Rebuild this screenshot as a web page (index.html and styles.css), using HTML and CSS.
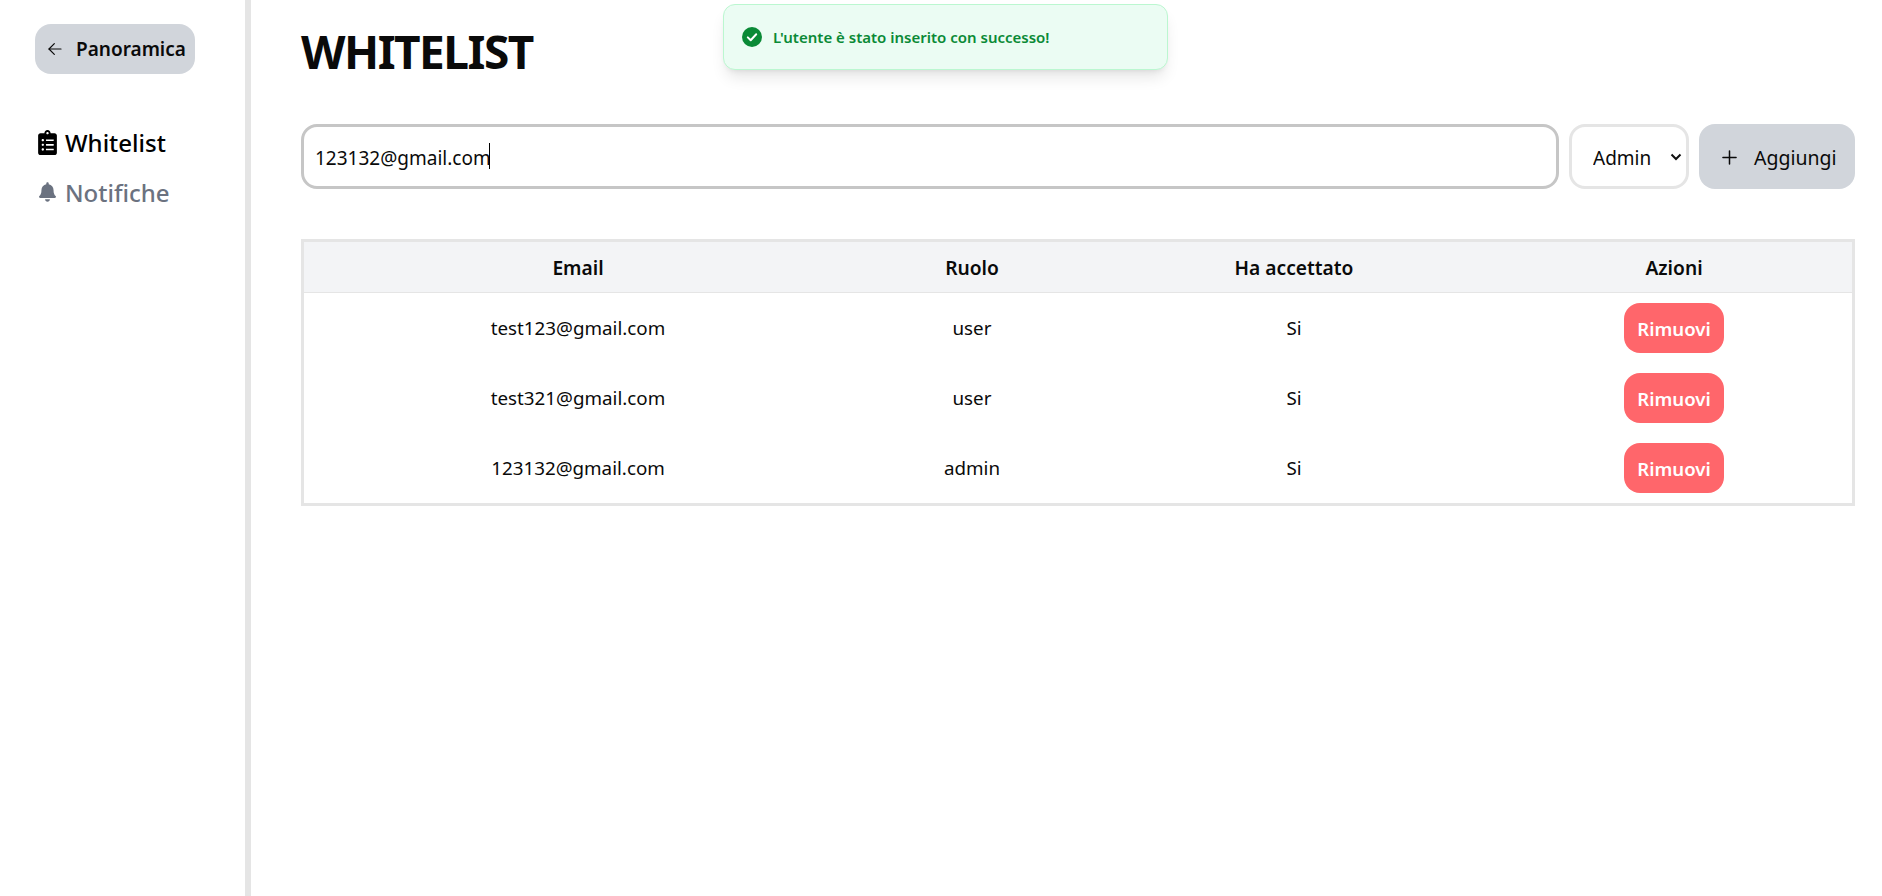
FILE: index.html
```html
<!DOCTYPE html>
<html lang="en">
<head>
  <meta charset="UTF-8">
  <meta name="viewport" content="width=device-width, initial-scale=1.0">
  <title>Whitelist</title>
  <link rel="stylesheet" href="styles.css">
</head>
<body>
  <aside class="sidebar">
    <button class="back-btn" type="button">
      <svg class="back-icon" viewBox="0 0 24 24" fill="none" stroke="currentColor" stroke-width="1.8" stroke-linecap="round" stroke-linejoin="round"><path d="M21 12H3"/><path d="M11 4l-8 8 8 8"/></svg>
      Panoramica
    </button>
    <nav class="side-nav">
      <a class="side-link active" href="#">
        <span class="side-icon">
          <svg class="icon-clip" viewBox="0 0 384 512" fill="currentColor"><path d="M336 64h-80c0-35.3-28.7-64-64-64s-64 28.7-64 64H48C21.5 64 0 85.5 0 112v352c0 26.5 21.5 48 48 48h288c26.5 0 48-21.5 48-48V112c0-26.5-21.5-48-48-48zM96 424c-13.3 0-24-10.7-24-24s10.7-24 24-24 24 10.7 24 24-10.7 24-24 24zm0-96c-13.3 0-24-10.7-24-24s10.7-24 24-24 24 10.7 24 24-10.7 24-24 24zm0-96c-13.3 0-24-10.7-24-24s10.7-24 24-24 24 10.7 24 24-10.7 24-24 24zm96-192c13.3 0 24 10.7 24 24s-10.7 24-24 24-24-10.7-24-24 10.7-24 24-24zm128 368c0 4.4-3.6 8-8 8H168c-4.4 0-8-3.6-8-8v-16c0-4.4 3.6-8 8-8h144c4.4 0 8 3.6 8 8v16zm0-96c0 4.4-3.6 8-8 8H168c-4.4 0-8-3.6-8-8v-16c0-4.4 3.6-8 8-8h144c4.4 0 8 3.6 8 8v16zm0-96c0 4.4-3.6 8-8 8H168c-4.4 0-8-3.6-8-8v-16c0-4.4 3.6-8 8-8h144c4.4 0 8 3.6 8 8v16z"/></svg>
        </span>
        Whitelist
      </a>
      <a class="side-link" href="#">
        <span class="side-icon">
          <svg class="icon-bell" viewBox="0 0 448 512" fill="currentColor"><path d="M224 512c35.32 0 63.97-28.65 63.97-64H160.03c0 35.35 28.65 64 63.97 64zm215.39-149.71c-19.32-20.76-55.47-51.99-55.47-154.29 0-77.7-54.48-139.9-127.94-155.16V32c0-17.67-14.32-32-31.98-32s-31.98 14.33-31.98 32v20.84C118.56 68.1 64.08 130.3 64.08 208c0 102.3-36.15 133.53-55.47 154.29-6 6.45-8.66 14.16-8.61 21.71.11 16.4 12.98 32 32.1 32h383.8c19.12 0 32-15.6 32.1-32 .05-7.55-2.61-15.27-8.61-21.71z"/></svg>
        </span>
        Notifiche
      </a>
    </nav>
  </aside>

  <main class="content">
    <h1 class="page-title">WHITELIST</h1>

    <form class="add-form">
      <div class="email-field">
        <input class="email-input" type="email" value="123132@gmail.com">
        <span class="caret"></span>
      </div>
      <select class="role-select">
        <option>Admin</option>
        <option>User</option>
      </select>
      <button class="add-btn" type="button">
        <svg class="plus-icon" viewBox="0 0 16 16" fill="none" stroke="currentColor" stroke-width="1.6" stroke-linecap="round"><path d="M8 1v14"/><path d="M1 8h14"/></svg>
        Aggiungi
      </button>
    </form>

    <div class="table-wrap">
      <table class="users">
        <colgroup>
          <col class="col-email">
          <col class="col-role">
          <col class="col-accepted">
          <col class="col-actions">
        </colgroup>
        <thead>
          <tr>
            <th>Email</th>
            <th>Ruolo</th>
            <th>Ha accettato</th>
            <th>Azioni</th>
          </tr>
        </thead>
        <tbody>
          <tr>
            <td>test123@gmail.com</td>
            <td>user</td>
            <td>Si</td>
            <td><button class="remove-btn" type="button">Rimuovi</button></td>
          </tr>
          <tr>
            <td>test321@gmail.com</td>
            <td>user</td>
            <td>Si</td>
            <td><button class="remove-btn" type="button">Rimuovi</button></td>
          </tr>
          <tr>
            <td>123132@gmail.com</td>
            <td>admin</td>
            <td>Si</td>
            <td><button class="remove-btn" type="button">Rimuovi</button></td>
          </tr>
        </tbody>
      </table>
    </div>
  </main>

  <div class="toast">
    <svg class="toast-icon" viewBox="0 0 20 20"><circle cx="10" cy="10" r="10" fill="#0a8a36"/><path d="M5.8 10.4l2.9 2.8 5.5-6" fill="none" stroke="#fff" stroke-width="2" stroke-linecap="round" stroke-linejoin="round"/></svg>
    L'utente è stato inserito con successo!
  </div>
</body>
</html>
```

FILE: styles.css
```css
/* Basic styling */
* {
  box-sizing: border-box;
}
html, body {
  height: 100%;
}
body {
  display: flex;
  margin: 0;
  background-color: #fff;
  color: #0a0a0a;
  font-family: "Noto Sans", "Open Sans", Arial, sans-serif;
  overflow: hidden;
}
button, input, select {
  font-family: inherit;
}

/* Sidebar */
.sidebar {
  flex: 0 0 251px;
  height: 896px;
  padding: 24px 0 0 35px;
  border-right: 6px solid #e5e5e5;
}
.back-btn {
  display: flex;
  align-items: center;
  gap: 13px;
  width: 160px;
  height: 50px;
  padding: 0 0 0 12px;
  background-color: #d1d5db;
  color: #0a0a0a;
  border: none;
  border-radius: 16px;
  font-size: 19px;
  font-weight: 600;
  white-space: nowrap;
}
.back-icon {
  flex: none;
  width: 16px;
  height: 16px;
}
.side-nav {
  display: flex;
  flex-direction: column;
  gap: 8px;
  margin-top: 47px;
}
.side-link {
  display: flex;
  align-items: center;
  gap: 6px;
  height: 42px;
  padding-left: 1px;
  color: #6b7280;
  font-size: 24px;
  font-weight: 500;
  text-decoration: none;
}
.side-link.active {
  color: #000;
}
.side-icon {
  display: flex;
  justify-content: center;
  width: 23px;
}
.icon-clip {
  width: 19px;
  height: 25px;
}
.icon-bell {
  width: 17px;
  height: 20px;
}

/* Main */
.content {
  flex: 1;
  min-width: 0;
  padding: 0 27px 0 50px;
}
.page-title {
  height: 124px;
  margin: 0;
  padding-top: 19px;
  font-size: 46px;
  line-height: 64px;
  font-weight: 700;
  letter-spacing: -1.5px;
}
.add-form {
  display: flex;
  gap: 10px;
  height: 65px;
}
.email-field {
  position: relative;
  flex: 1;
}
.email-input {
  width: 100%;
  height: 100%;
  padding: 2px 11px 0;
  background: #fff;
  color: #0a0a0a;
  border: 3px solid #c6c6c6;
  border-radius: 16px;
  font-size: 19px;
  outline: none;
}
.caret {
  position: absolute;
  left: 188px;
  top: 19px;
  width: 1px;
  height: 26px;
  background-color: #000;
}
.role-select {
  width: 120px;
  padding: 2px 10px 0 21px;
  appearance: none;
  background-color: #fff;
  background-image: url("data:image/svg+xml,%3Csvg xmlns='http://www.w3.org/2000/svg' viewBox='0 0 12 8'%3E%3Cpath d='M1.5 1.5L6 6l4.5-4.5' fill='none' stroke='%23111' stroke-width='2'/%3E%3C/svg%3E");
  background-repeat: no-repeat;
  background-position: right 4px center;
  background-size: 12px 8px;
  color: #0a0a0a;
  border: 3px solid #e5e5e5;
  border-radius: 16px;
  font-size: 19px;
  outline: none;
}
.add-btn {
  display: flex;
  align-items: center;
  gap: 17px;
  width: 156px;
  padding: 2px 0 0 23px;
  background-color: #d1d5db;
  color: #0a0a0a;
  border: none;
  border-radius: 16px;
  font-size: 19.5px;
  white-space: nowrap;
}
.plus-icon {
  flex: none;
  width: 15px;
  height: 15px;
}

/* Table */
.table-wrap {
  margin-top: 50px;
  border: 3px solid #e5e5e5;
}
.users {
  width: 100%;
  border-collapse: collapse;
  table-layout: fixed;
  font-size: 18.8px;
}
.col-email { width: 548px; }
.col-role { width: 240px; }
.col-accepted { width: 404px; }
.users th {
  height: 50px;
  padding: 1px 0 0;
  background-color: #f3f4f6;
  border-bottom: 1px solid #e5e5e5;
  font-size: 19.2px;
  font-weight: 600;
}
.users td {
  height: 70px;
  padding: 0;
  text-align: center;
}
.users tbody tr:first-child td {
  height: 71px;
  padding-top: 1px;
}
.remove-btn {
  width: 100px;
  height: 50px;
  padding: 0;
  background-color: #ff666b;
  color: #fff;
  border: none;
  border-radius: 16px;
  font-size: 18.6px;
  font-weight: 600;
  vertical-align: middle;
}

/* Toast */
.toast {
  position: absolute;
  left: 723px;
  top: 4px;
  display: flex;
  align-items: center;
  gap: 11px;
  width: 445px;
  height: 66px;
  padding-left: 18px;
  background-color: #ebfcf3;
  color: #0a8a36;
  border: 1px solid #bbf7d0;
  border-radius: 12px;
  box-shadow: 0 10px 15px -3px rgba(0, 0, 0, 0.1), 0 4px 6px -4px rgba(0, 0, 0, 0.1);
  font-size: 15px;
  font-weight: 600;
}
.toast-icon {
  flex: none;
  width: 20px;
  height: 20px;
}
```
